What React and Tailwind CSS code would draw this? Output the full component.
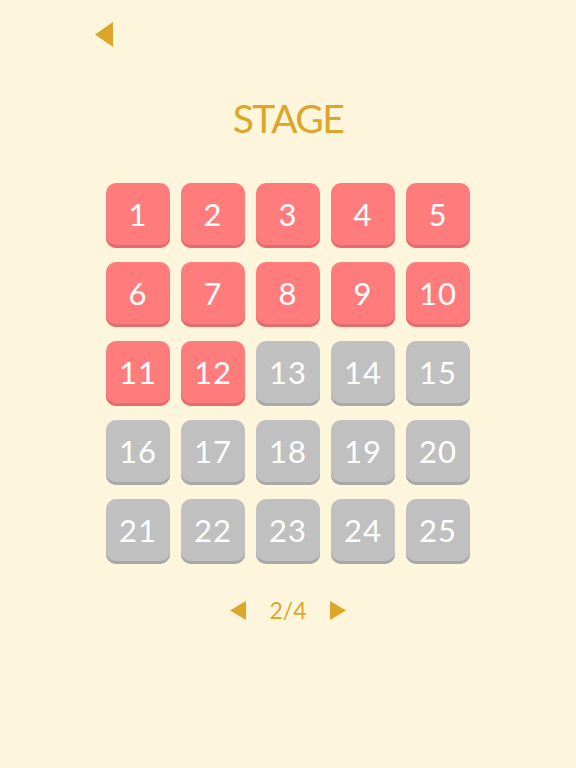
import React from "react";

const GOLD = "#dca629";

function Triangle({ dir = "left", w, h }) {
  const pts = dir === "left" ? `${w},0 0,${h / 2} ${w},${h}` : `0,0 ${w},${h / 2} 0,${h}`;
  return (
    <svg width={w} height={h} viewBox={`0 0 ${w} ${h}`} className="block">
      <polygon points={pts} fill={GOLD} />
    </svg>
  );
}

function StageTile({ n, open }) {
  return (
    <div
      className={
        open
          ? "h-[65px] w-[64px] rounded-[10px] bg-[#ff7c7c] shadow-[inset_0_-3px_0_#e46c6c] flex items-center justify-center pb-[2px]"
          : "h-[65px] w-[64px] rounded-[10px] bg-[#c0c0c0] shadow-[inset_0_-3px_0_#a9a9a9] flex items-center justify-center pb-[2px]"
      }
    >
      <span className="text-white text-[31px] leading-none tracking-[1px]">{n}</span>
    </div>
  );
}

export default function App() {
  const stages = Array.from({ length: 25 }, (_, i) => i + 1);
  return (
    <div
      className="min-h-[768px] w-full bg-[#fef6dc] flex flex-col"
      style={{ fontFamily: "Lato, 'Noto Sans', sans-serif" }}
    >
      <div className="pt-[22px] pl-[95px]">
        <Triangle dir="left" w={18} h={25} />
      </div>

      <h1 className="mt-[47px] text-center text-[39px] leading-[48px] tracking-[-1.5px] text-[#dca629]">
        STAGE
      </h1>

      <div className="mt-[41px] mx-auto grid grid-cols-5 gap-x-[11px] gap-y-[14px]">
        {stages.map((n) => (
          <StageTile key={n} n={n} open={n <= 12} />
        ))}
      </div>

      <div className="mt-[35px] flex items-center justify-center">
        <Triangle dir="left" w={16} h={19} />
        <span className="mx-[23px] text-[23px] leading-none text-[#dca629]">2/4</span>
        <Triangle dir="right" w={16} h={19} />
      </div>
    </div>
  );
}
